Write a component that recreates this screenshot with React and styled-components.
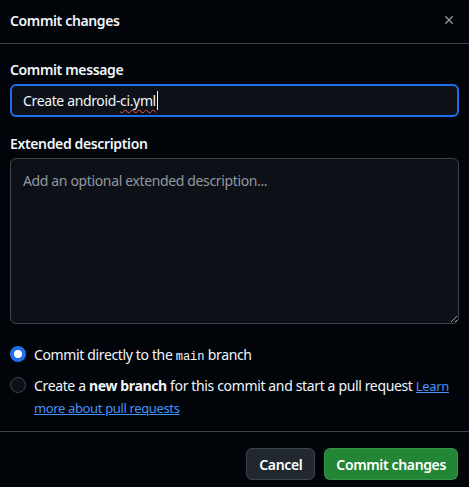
import React from "react";
import styled, { createGlobalStyle } from "styled-components";

const GlobalStyle = createGlobalStyle`
  html, body {
    margin: 0;
    padding: 0;
    background: #010409;
  }
  body {
    font-family: "Noto Sans", "Open Sans", sans-serif;
    color: #f0f6fc;
    font-size: 14px;
    letter-spacing: -0.36px;
  }
`;

const Dialog = styled.div`
  width: 469px;
  height: 487px;
  background: #010409;
  display: flex;
  flex-direction: column;
  overflow: hidden;
`;

const Header = styled.div`
  height: 44px;
  display: flex;
  align-items: center;
  justify-content: space-between;
  padding: 0 13px 0 10px;
  border-bottom: 1px solid #3d444d;
  box-sizing: border-box;
`;

const Title = styled.h1`
  margin: 0 0 2px;
  font-size: 14px;
  font-weight: 600;
  line-height: 20px;
`;

const CloseButton = styled.button`
  background: none;
  border: 0;
  padding: 0;
  width: 14px;
  height: 14px;
  display: flex;
  align-items: center;
  justify-content: center;
  color: #9198a1;
  margin-top: -4px;
`;

const Body = styled.div`
  padding: 16px 10px 0 10px;
  display: flex;
  flex-direction: column;
`;

const Label = styled.label`
  font-weight: 600;
  font-size: 14px;
  line-height: 20px;
  margin-bottom: ${(p) => p.$gap || 4}px;
`;

const MessageBox = styled.div`
  height: 33px;
  box-sizing: border-box;
  border: 2px solid #1f6feb;
  border-radius: 6px;
  background: #0d1117;
  display: flex;
  align-items: center;
  padding: 0 11px;
  font-size: 14px;
  margin-bottom: 17px;
`;

const Squiggle = styled.span`
  text-decoration: underline wavy #e5534b;
  text-decoration-thickness: 1px;
  text-underline-offset: 3px;
  border-right: 1px solid #f0f6fc;
  padding-right: 1px;
`;

const Description = styled.textarea`
  height: 166px;
  box-sizing: border-box;
  border: 1px solid #3d444d;
  border-radius: 6px;
  background: #0d1117;
  color: #f0f6fc;
  font-family: inherit;
  letter-spacing: inherit;
  font-size: 14px;
  line-height: 20px;
  padding: 12px 12px;
  margin: 0 0 20px 0;
  resize: vertical;
  outline: none;
  &::placeholder {
    color: #9198a1;
  }
`;

const Options = styled.div`
  display: flex;
  flex-direction: column;
  gap: 7px;
`;

const Option = styled.div`
  display: flex;
  align-items: flex-start;
  gap: 8px;
  font-size: 14px;
  line-height: 21px;
`;

const Radio = styled.span`
  flex: none;
  width: 16px;
  height: 16px;
  box-sizing: border-box;
  border-radius: 50%;
  margin-top: 2px;
  border: ${(p) => (p.$checked ? "4px solid #1f6feb" : "1px solid #3d444d")};
  background: ${(p) => (p.$checked ? "#ffffff" : "#0d1117")};
`;

const Mono = styled.code`
  font-family: "Liberation Mono", "DejaVu Sans Mono", monospace;
  font-size: 12px;
  letter-spacing: 0;
`;

const LinkText = styled.a`
  color: #4493f8;
  text-decoration: underline;
  font-size: 13px;
`;

const Footer = styled.div`
  margin-top: auto;
  border-top: 1px solid #3d444d;
  padding: 16px 11px 7px;
  display: flex;
  justify-content: flex-end;
  gap: 9px;
`;

const Button = styled.button`
  height: 32px;
  padding: 0 ${(p) => (p.$primary ? 11 : 12)}px;
  border-radius: 6px;
  font-family: inherit;
  letter-spacing: inherit;
  font-size: 14px;
  font-weight: 600;
  color: #ffffff;
  border: 1px solid ${(p) => (p.$primary ? "rgba(255,255,255,0.1)" : "#3d444d")};
  background: ${(p) => (p.$primary ? "#238636" : "#212830")};
`;

export default function App() {
  return (
    <>
      <GlobalStyle />
      <Dialog>
        <Header>
          <Title>Commit changes</Title>
          <CloseButton aria-label="Close">
            <svg width="14" height="14" viewBox="0 0 16 16" fill="currentColor">
              <path d="M3.72 3.72a.75.75 0 0 1 1.06 0L8 6.94l3.22-3.22a.749.749 0 0 1 1.275.326.749.749 0 0 1-.215.734L9.06 8l3.22 3.22a.749.749 0 0 1-.326 1.275.749.749 0 0 1-.734-.215L8 9.06l-3.22 3.22a.751.751 0 0 1-1.042-.018.751.751 0 0 1-.018-1.042L6.94 8 3.72 4.78a.75.75 0 0 1 0-1.06Z" />
            </svg>
          </CloseButton>
        </Header>
        <Body>
          <Label>Commit message</Label>
          <MessageBox role="textbox">
            Create android-<Squiggle>ci.yml</Squiggle>
          </MessageBox>
          <Label $gap={4}>Extended description</Label>
          <Description placeholder="Add an optional extended description..." />
          <Options>
            <Option>
              <Radio $checked />
              <span>
                Commit directly to the <Mono>main</Mono> branch
              </span>
            </Option>
            <Option>
              <Radio />
              <span>
                Create a <b>new branch</b> for this commit and start a pull request{" "}
                <LinkText href="#">Learn more about pull requests</LinkText>
              </span>
            </Option>
          </Options>
        </Body>
        <Footer>
          <Button>Cancel</Button>
          <Button $primary>Commit changes</Button>
        </Footer>
      </Dialog>
    </>
  );
}
